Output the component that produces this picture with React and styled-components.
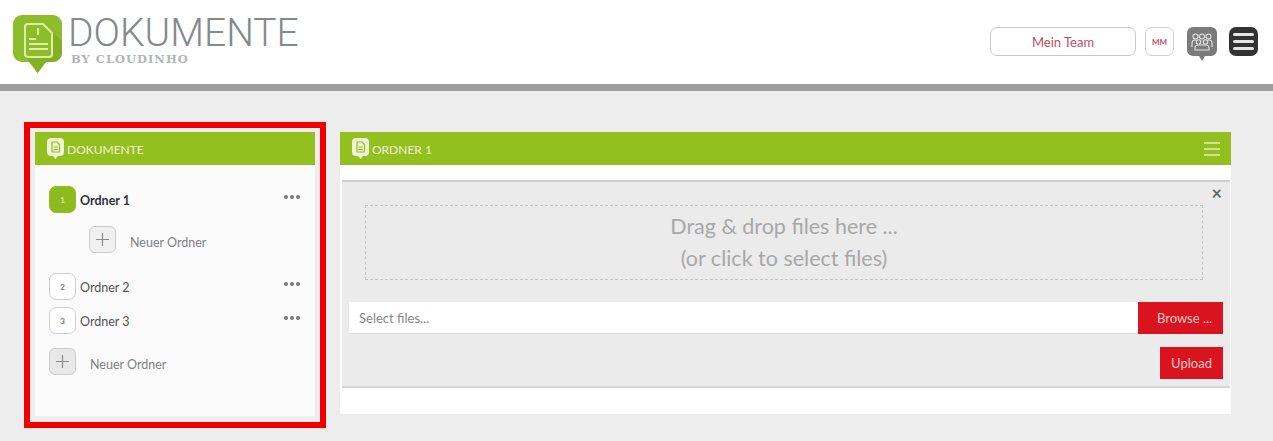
import React from 'react';
import styled, { createGlobalStyle } from 'styled-components';

const GlobalStyle = createGlobalStyle`
  html, body {
    margin: 0;
    padding: 0;
    height: 100%;
    background: #ededed;
    font-family: 'Lato', 'Open Sans', sans-serif;
  }
  * {
    box-sizing: border-box;
  }
`;

const Page = styled.div`
  width: 1273px;
  height: 441px;
  overflow: hidden;
  background: #ededed;
`;

const TopBar = styled.header`
  display: flex;
  justify-content: space-between;
  height: 91px;
  padding: 15px 15px 0 13px;
  background: #fff;
  border-bottom: 7px solid #9e9e9e;
`;

const Brand = styled.div`
  display: flex;
  gap: 6px;
`;

const BrandText = styled.div`
  display: flex;
  flex-direction: column;
`;

const BrandTitle = styled.div`
  margin-top: 1px;
  font-family: 'Roboto', 'Lato', sans-serif;
  font-size: 39px;
  font-weight: 300;
  line-height: 34px;
  color: #85898d;
`;

const BrandSub = styled.div`
  margin: 2px 0 0 3px;
  font-family: 'DejaVu Serif', serif;
  font-size: 11.5px;
  font-weight: 700;
  line-height: 14px;
  letter-spacing: 1px;
  color: #b3b5b7;
`;

const TopActions = styled.div`
  display: flex;
  align-items: flex-start;
  padding-top: 12px;
`;

const TeamButton = styled.button`
  width: 146px;
  height: 29px;
  margin-right: 9px;
  padding: 0;
  border: 1px solid #c9c9c9;
  border-radius: 7px;
  background: #fff;
  font-family: inherit;
  font-size: 13px;
  color: #c0515c;
`;

const UserBadge = styled.div`
  display: flex;
  align-items: center;
  justify-content: center;
  width: 29px;
  height: 29px;
  margin-right: 13px;
  border: 1px solid #cfcfcf;
  border-radius: 7px;
  font-size: 8px;
  font-weight: 700;
  color: #c0515c;
`;

const MenuTile = styled.div`
  display: flex;
  flex-direction: column;
  justify-content: center;
  gap: 4px;
  width: 29px;
  height: 29px;
  margin-left: 12px;
  padding: 0 4px;
  border-radius: 7px;
  background: #333;
`;

const MenuLine = styled.span`
  display: block;
  height: 3px;
  border-radius: 2px;
  background: #e6e6e6;
`;

const Content = styled.main`
  display: flex;
  align-items: flex-start;
  gap: 14px;
  padding: 31px 0 0 24px;
`;

const SideFrame = styled.section`
  width: 302px;
  height: 306px;
  padding: 4px 5px 6px;
  border: 6px solid #f00000;
  background: #eeeeee;
`;

const SidePanel = styled.div`
  display: flex;
  flex-direction: column;
  height: 100%;
  background: #fbfbfb;
`;

const PanelHeader = styled.div`
  display: flex;
  flex: none;
  align-items: center;
  justify-content: space-between;
  height: 33px;
  padding: 0 12px;
  background: #93c01f;
  color: #eef5d6;
`;

const PanelTitle = styled.div`
  display: flex;
  align-items: center;
  gap: 3px;
`;

const PanelTitleText = styled.span`
  padding-top: 2px;
  font-size: 12px;
`;

const FolderList = styled.div`
  padding: 21px 15px 0 14px;
`;

const FolderRow = styled.div`
  display: flex;
  align-items: center;
  height: 27px;
  margin-bottom: ${(p) => p.$gap}px;
`;

const FolderNumber = styled.div`
  display: flex;
  flex: none;
  align-items: center;
  justify-content: center;
  width: 27px;
  height: 27px;
  margin-right: 4px;
  border: 1px solid ${(p) => (p.$active ? '#93c01f' : '#cfcfcf')};
  border-radius: 7px;
  background: ${(p) => (p.$active ? '#8dbb1f' : '#fff')};
  font-size: 8px;
  font-weight: 700;
  color: ${(p) => (p.$active ? '#d9e8a8' : '#777')};
`;

const FolderName = styled.div`
  flex: 1;
  padding-top: 1px;
  font-size: 12.5px;
  font-weight: ${(p) => (p.$active ? 700 : 400)};
  color: ${(p) => (p.$active ? '#333' : '#555')};
`;

const Dots = styled.div`
  display: flex;
  gap: 2px;
  margin-top: -6px;
`;

const Dot = styled.span`
  width: 4px;
  height: 4px;
  border-radius: 50%;
  background: #777;
`;

const NewFolderRow = styled.div`
  display: flex;
  align-items: center;
  height: 27px;
  margin: ${(p) => p.$margin};
`;

const PlusTile = styled.div`
  display: flex;
  flex: none;
  align-items: center;
  justify-content: center;
  width: 27px;
  height: 27px;
  border: 1px solid #cccccc;
  border-radius: 6px;
  background: ${(p) => (p.$dim ? '#e8e8e8' : '#f0f0f0')};
`;

const NewFolderLabel = styled.span`
  margin: 6px 0 0 14px;
  font-size: 12.5px;
  color: #7f8284;
`;

const MainPanel = styled.section`
  width: 891px;
  margin-top: 10px;
  background: #fff;
`;

const HeaderMenu = styled.div`
  display: flex;
  flex-direction: column;
  gap: 4px;
  width: 16px;
  margin-right: -1px;
`;

const HeaderMenuLine = styled.span`
  display: block;
  height: 2px;
  background: #cfe28f;
`;

const UploadArea = styled.div`
  position: relative;
  height: 208px;
  margin: 15px 1px 0 2px;
  padding: 23px 7px 0 7px;
  border-top: 2px solid #cfcfcf;
  border-bottom: 2px solid #d6d6d6;
  background: #ebebeb;
`;

const CloseMark = styled.span`
  position: absolute;
  top: 3px;
  right: 8px;
  font-size: 18px;
  font-weight: 700;
  line-height: 16px;
  color: #666;
`;

const DropZone = styled.div`
  display: flex;
  flex-direction: column;
  align-items: center;
  justify-content: center;
  height: 75px;
  margin: 0 20px 0 16px;
  padding-bottom: 2px;
  border: 1px dashed #c4c4c4;
  font-size: 21.5px;
  line-height: 32px;
  color: #a8a8a8;
`;

const FileRow = styled.div`
  display: flex;
  height: 32px;
  margin-top: 22px;
`;

const FileInput = styled.div`
  display: flex;
  flex: 1;
  align-items: center;
  padding-left: 10px;
  border-bottom: 1px solid #dedede;
  background: #fff;
  font-size: 13px;
  color: #888;
`;

const RedButton = styled.button`
  height: 32px;
  width: ${(p) => p.$width}px;
  padding: 0 0 0 ${(p) => p.$pad || 0}px;
  border: none;
  background: #d9141e;
  font-family: inherit;
  font-size: 13px;
  color: #f6c9c9;
`;

const UploadRow = styled.div`
  display: flex;
  justify-content: flex-end;
  margin-top: 13px;
`;

const PanelFoot = styled.div`
  height: 26px;
`;

const DocIcon = () => (
  <svg width="49" height="58" viewBox="0 0 49 58">
    <path
      d="M9 0h31a9 9 0 0 1 9 9v29a9 9 0 0 1-9 9H33l-8.500 11L16 47H9a9 9 0 0 1-9-9V9a9 9 0 0 1 9-9z"
      fill="#8ebd2c"
    />
    <path
      d="M40 17v30H33l-8.500 11-4-6L13 43z M49 26v12a9 9 0 0 1-9 9V17z"
      fill="#84b026"
    />
    <path
      d="M15 9h15l9 9v21a3 3 0 0 1-3 3H15a3 3 0 0 1-3-3V12a3 3 0 0 1 3-3z"
      fill="#8ebd2c"
      stroke="#dcefa6"
      strokeWidth="2"
    />
    <path
      d="M25 13v7M16 24h7M16 29h19M16 34h19"
      stroke="#dcefa6"
      strokeWidth="2"
      fill="none"
    />
  </svg>
);

const SmallDocIcon = () => (
  <svg width="17" height="21" viewBox="0 0 17 21">
    <path
      d="M4 0h9a4 4 0 0 1 4 4v10a4 4 0 0 1-4 4h-2l-2.500 3L6 18H4a4 4 0 0 1-4-4V4a4 4 0 0 1 4-4z"
      fill="#eef5d6"
    />
    <path
      d="M5 4h5l2.500 2.500V14H5z"
      fill="none"
      stroke="#93c01f"
      strokeWidth="1.2"
    />
    <path d="M6.500 9h4.500M6.500 11.500h4.500" stroke="#93c01f" strokeWidth="1" />
  </svg>
);

const TeamIcon = () => (
  <svg width="30" height="36" viewBox="0 0 30 36">
    <path
      d="M6 0h18a6 6 0 0 1 6 6v17a6 6 0 0 1-6 6h-6l-3 5-3-5H6a6 6 0 0 1-6-6V6a6 6 0 0 1 6-6z"
      fill="#7b7b7b"
    />
    <g fill="none" stroke="#e4e4e4" strokeWidth="1.100">
      <circle cx="8.500" cy="9.500" r="2.500" />
      <circle cx="15" cy="9.500" r="2.500" />
      <circle cx="21.500" cy="9.500" r="2.500" />
      <path d="M5 20v-4a3 3 0 0 1 3-3h1M25 20v-4a3 3 0 0 0-3-3h-1" />
      <circle cx="11.500" cy="15" r="2.200" />
      <circle cx="18.500" cy="15" r="2.200" />
      <path d="M8 23v-2a3 3 0 0 1 3-3h8a3 3 0 0 1 3 3v2z" />
    </g>
  </svg>
);

const PlusIcon = () => (
  <svg width="15" height="15" viewBox="0 0 15 15">
    <path d="M7.500 1v13M1 7.500h13" stroke="#8b8b8b" strokeWidth="1.200" />
  </svg>
);

const MoreDots = () => (
  <Dots>
    <Dot />
    <Dot />
    <Dot />
  </Dots>
);

const folders = [
  { id: 1, name: 'Ordner 1', active: true, gap: 13 },
  { id: 2, name: 'Ordner 2', gap: 7 },
  { id: 3, name: 'Ordner 3', gap: 14 },
];

const App = () => {
  return (
    <Page>
      <GlobalStyle />
      <TopBar>
        <Brand>
          <DocIcon />
          <BrandText>
            <BrandTitle>DOKUMENTE</BrandTitle>
            <BrandSub>BY CLOUDINHO</BrandSub>
          </BrandText>
        </Brand>
        <TopActions>
          <TeamButton>Mein Team</TeamButton>
          <UserBadge>MM</UserBadge>
          <TeamIcon />
          <MenuTile>
            <MenuLine />
            <MenuLine />
            <MenuLine />
          </MenuTile>
        </TopActions>
      </TopBar>
      <Content>
        <SideFrame>
          <SidePanel>
            <PanelHeader>
              <PanelTitle>
                <SmallDocIcon />
                <PanelTitleText>DOKUMENTE</PanelTitleText>
              </PanelTitle>
            </PanelHeader>
            <FolderList>
              {folders.map((folder) => (
                <React.Fragment key={folder.id}>
                  <FolderRow $gap={folder.gap}>
                    <FolderNumber $active={folder.active}>{folder.id}</FolderNumber>
                    <FolderName $active={folder.active}>{folder.name}</FolderName>
                    <MoreDots />
                  </FolderRow>
                  {folder.active && (
                    <NewFolderRow $margin="0 0 20px 40px">
                      <PlusTile>
                        <PlusIcon />
                      </PlusTile>
                      <NewFolderLabel>Neuer Ordner</NewFolderLabel>
                    </NewFolderRow>
                  )}
                </React.Fragment>
              ))}
              <NewFolderRow $margin="0">
                <PlusTile $dim>
                  <PlusIcon />
                </PlusTile>
                <NewFolderLabel>Neuer Ordner</NewFolderLabel>
              </NewFolderRow>
            </FolderList>
          </SidePanel>
        </SideFrame>
        <MainPanel>
          <PanelHeader>
            <PanelTitle>
              <SmallDocIcon />
              <PanelTitleText>ORDNER 1</PanelTitleText>
            </PanelTitle>
            <HeaderMenu>
              <HeaderMenuLine />
              <HeaderMenuLine />
              <HeaderMenuLine />
            </HeaderMenu>
          </PanelHeader>
          <UploadArea>
            <CloseMark>×</CloseMark>
            <DropZone>
              <div>Drag &amp; drop files here ...</div>
              <div>(or click to select files)</div>
            </DropZone>
            <FileRow>
              <FileInput>Select files...</FileInput>
              <RedButton $width={85} $pad={8}>
                Browse ...
              </RedButton>
            </FileRow>
            <UploadRow>
              <RedButton $width={63}>Upload</RedButton>
            </UploadRow>
          </UploadArea>
          <PanelFoot />
        </MainPanel>
      </Content>
    </Page>
  );
};

export default App;
